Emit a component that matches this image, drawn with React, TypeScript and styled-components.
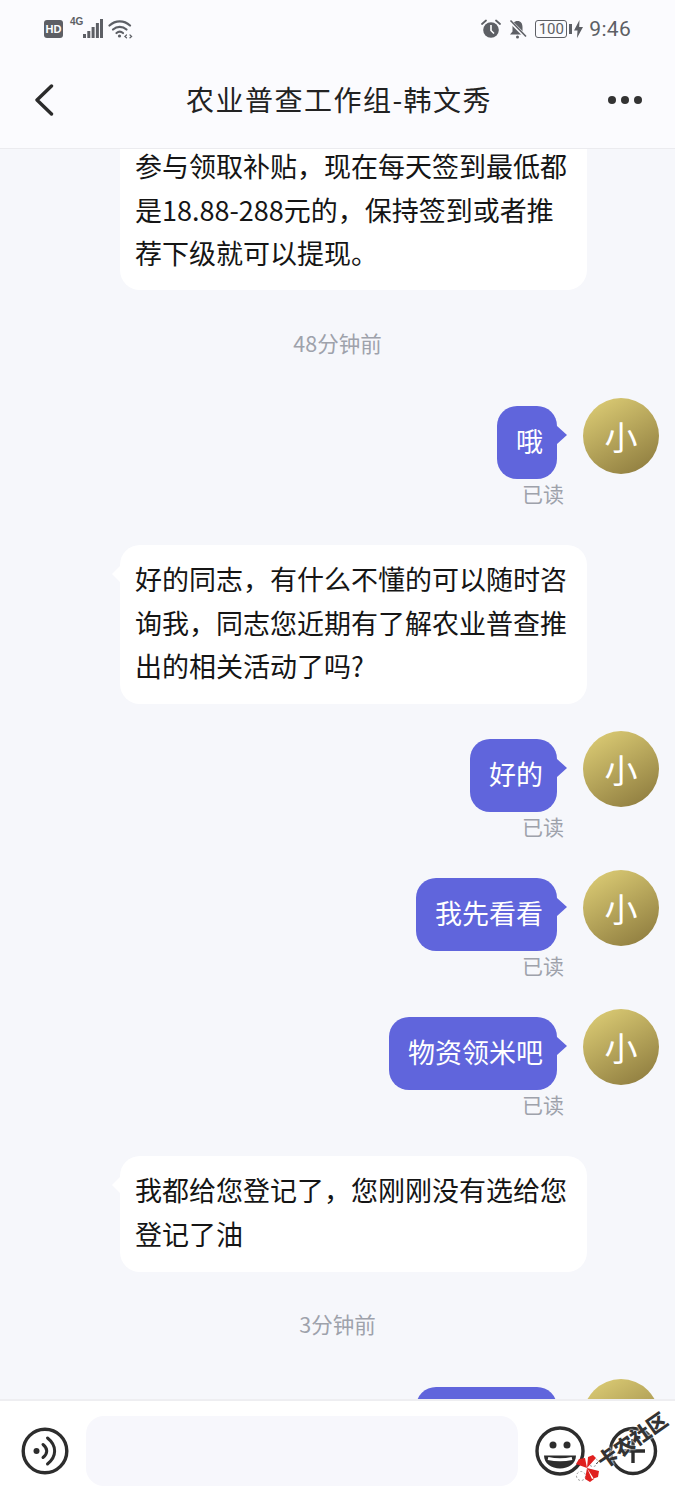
import React from "react";
import styled, { createGlobalStyle } from "styled-components";

const GlobalStyle = createGlobalStyle`
    html, body {
        margin: 0;
        padding: 0;
        background: #f6f7fb;
    }
    * {
        box-sizing: border-box;
    }
`;

type Item =
    | { kind: "in"; text: string; first?: boolean }
    | { kind: "out"; text: string; width?: number }
    | { kind: "time"; text: string };

const messages: Item[] = [
    { kind: "in", first: true, text: "参与领取补贴，现在每天签到最低都是18.88-288元的，保持签到或者推荐下级就可以提现。" },
    { kind: "time", text: "48分钟前" },
    { kind: "out", text: "哦" },
    { kind: "in", text: "好的同志，有什么不懂的可以随时咨询我，同志您近期有了解农业普查推出的相关活动了吗?" },
    { kind: "out", text: "好的" },
    { kind: "out", text: "我先看看" },
    { kind: "out", text: "物资领米吧" },
    { kind: "in", text: "我都给您登记了，您刚刚没有选给您登记了油" },
    { kind: "time", text: "3分钟前" },
    // only the top of this one shows above the input bar
    { kind: "out", text: "", width: 141 },
];

function StatusLeft() {
    return (
        <StatusGroup>
            <HdBadge>HD</HdBadge>
            <NetLabel>4G</NetLabel>
            <svg width="20" height="20" viewBox="0 0 20 20" fill="#5d5f65">
                <rect x="0" y="15" width="3" height="4" />
                <rect x="4.3" y="12" width="3" height="7" />
                <rect x="8.6" y="8" width="3" height="11" />
                <rect x="12.9" y="4" width="3" height="15" />
                <rect x="17" y="0" width="3" height="19" />
            </svg>
            <WifiIcon width="25" height="20" viewBox="0 0 25 20" fill="none" stroke="#5d5f65" strokeWidth="2.2" strokeLinecap="round">
                <path d="M1.5 6.5C7.5 1 16 1 22 6.5" />
                <path d="M5 10.5C9 7 14.5 7 18.5 10.5" />
                <path d="M8.5 14C10.5 12.4 13 12.4 15 14" />
                <circle cx="11.5" cy="17" r="1.6" fill="#5d5f65" stroke="none" />
                <path d="M18.5 16l-1.6 1.4 1.6 1.4M22 16l1.6 1.4-1.6 1.4" strokeWidth="1.2" />
            </WifiIcon>
        </StatusGroup>
    );
}

function StatusRight() {
    return (
        <StatusGroup>
            <svg width="20" height="20" viewBox="0 0 20 20">
                <circle cx="10" cy="11" r="7.8" fill="#5d5f65" />
                <path d="M10 6v5.5l3 3" fill="none" stroke="#fff" strokeWidth="1.6" />
                <path d="M1 5l4-3.5M19 5l-4-3.5" stroke="#5d5f65" strokeWidth="1.8" strokeLinecap="round" />
            </svg>
            <BellIcon width="19" height="20" viewBox="0 0 19 20">
                <path d="M9.5 2c-3.4 0-5 2.600-5 6v4.500L2 15.500h15L14.500 12.500V8c0-3.400-1.600-6-5-6z" fill="#5d5f65" />
                <circle cx="9.500" cy="18" r="1.500" fill="#5d5f65" />
                <path d="M1.500 1.500l16 16" stroke="#fbfbfe" strokeWidth="3.500" />
                <path d="M2.500 1.500l15.500 16" stroke="#5d5f65" strokeWidth="1.600" />
            </BellIcon>
            <Battery>100</Battery>
            <BatteryNub />
            <svg width="9" height="18" viewBox="0 0 9 18" fill="#5d5f65">
                <path d="M5.500 0L0 10.500h3.500L3 18l6-11H5.200z" />
            </svg>
            <Clock>9:46</Clock>
        </StatusGroup>
    );
}

function Row({ item }: { item: Item }) {
    if (item.kind === "time") {
        return <TimeLabel>{item.text}</TimeLabel>;
    }
    if (item.kind === "in") {
        return <InBubble $first={item.first}>{item.text}</InBubble>;
    }
    return (
        <OutRow>
            <OutColumn>
                <OutBubble $width={item.width}>{item.text}</OutBubble>
                {item.text && <ReadLabel>已读</ReadLabel>}
            </OutColumn>
            <Avatar>{item.text ? "小" : ""}</Avatar>
        </OutRow>
    );
}

export default function App() {
    return (
        <>
            <GlobalStyle />
            <Page>
                <Header>
                    <StatusBar>
                        <StatusLeft />
                        <StatusRight />
                    </StatusBar>
                    <NavBar>
                        <BackIcon width="20" height="32" viewBox="0 0 20 32" fill="none" stroke="#2b2b2b" strokeWidth="3.400" strokeLinecap="round" strokeLinejoin="round">
                            <path d="M17.500 2L3 16l14.500 14" />
                        </BackIcon>
                        <Title>农业普查工作组-韩文秀</Title>
                        <MoreDots>
                            <i />
                            <i />
                            <i />
                        </MoreDots>
                    </NavBar>
                </Header>

                <Chat>
                    {messages.map((item, key) => <Row item={item} key={key} />)}
                </Chat>

                <Footer>
                    <svg width="48" height="48" viewBox="0 0 48 48" fill="none" stroke="#2d2d2d" strokeLinecap="round">
                        <circle cx="24" cy="24" r="21.800" strokeWidth="3.400" />
                        <circle cx="15.500" cy="24" r="3" fill="#2d2d2d" stroke="none" />
                        <path d="M22 17.500c5 4 5 9 0 13" strokeWidth="3" />
                        <path d="M26.500 11c9.500 7.500 9.500 18.500 0 26" strokeWidth="3" />
                    </svg>
                    <InputBox />
                    <svg width="50" height="50" viewBox="0 0 50 50" fill="none" stroke="#2d2d2d">
                        <circle cx="25" cy="25" r="23" strokeWidth="3.400" />
                        <circle cx="18" cy="19" r="3.500" fill="#2d2d2d" stroke="none" />
                        <circle cx="32" cy="19" r="3.500" fill="#2d2d2d" stroke="none" />
                        <path d="M9 29.500h32c0 8-7.500 13-16 13S9 37.500 9 29.500z" fill="#2d2d2d" stroke="none" />
                        <path d="M13 32.500c7 1.500 17 1.500 24 0" stroke="#fff" strokeWidth="3" />
                    </svg>
                    <PlusIcon width="50" height="50" viewBox="0 0 50 50" fill="none" stroke="#2d2d2d" strokeWidth="3.400">
                        <circle cx="25" cy="25" r="22.500" />
                        <path d="M25 13v24M13 25h24" />
                    </PlusIcon>
                    <WatermarkBow width="30" height="30" viewBox="0 0 30 30">
                        <circle cx="6" cy="22" r="4.500" fill="#fff" stroke="#999" strokeDasharray="2 2" />
                        <circle cx="18" cy="8" r="4.500" fill="#fff" stroke="#999" strokeDasharray="2 2" />
                        <path d="M12 14L1 10l3-5 6-1zM12 14l1-11 5-2 3 3zM12 14l12 3-1 6-6 2zM12 14l-2 11 5 3 4-3z" fill="#e0201f" />
                        <path d="M21 10l5-5" stroke="#555" strokeWidth="1" />
                    </WatermarkBow>
                    <WatermarkText>卡农社区</WatermarkText>
                </Footer>
            </Page>
        </>
    );
}

const Page = styled.div`
    position: relative;
    display: flex;
    flex-direction: column;
    width: 675px;
    height: 1500px;
    overflow: hidden;
    background-color: #f6f7fb;
    font-family: "Noto Sans CJK SC", "Noto Sans", sans-serif;
`;

const Header = styled.header`
    flex: none;
    height: 149px;
    background-color: #fbfbfe;
    border-bottom: 1px solid #ebebef;
`;

const StatusBar = styled.div`
    display: flex;
    justify-content: space-between;
    align-items: center;
    height: 58px;
    padding: 0 44px;
`;

const StatusGroup = styled.div`
    display: flex;
    align-items: center;
`;

const HdBadge = styled.span`
    display: flex;
    justify-content: center;
    align-items: center;
    width: 19px;
    height: 18px;
    border-radius: 3px;
    background-color: #5d5f65;
    color: #fff;
    font-family: "Liberation Sans", sans-serif;
    font-size: 11px;
    font-weight: 700;
`;

const NetLabel = styled.span`
    align-self: flex-start;
    margin: -3px 0 0 7px;
    color: #5d5f65;
    font-family: "Liberation Sans", sans-serif;
    font-size: 10px;
    font-weight: 700;
`;

const WifiIcon = styled.svg`
    margin-left: 5px;
`;

const BellIcon = styled.svg`
    margin-left: 7px;
`;

const Battery = styled.span`
    display: flex;
    justify-content: center;
    align-items: center;
    width: 32px;
    height: 18px;
    margin-left: 8px;
    border: 1.500px solid #5d5f65;
    border-radius: 3px;
    color: #5d5f65;
    font-family: "Roboto", sans-serif;
    font-size: 15px;
`;

const BatteryNub = styled.span`
    width: 3px;
    height: 10px;
    margin: 0 2px;
    background-color: #5d5f65;
`;

const Clock = styled.span`
    margin-left: 6px;
    color: #5d5f65;
    font-family: "Roboto", sans-serif;
    font-size: 21px;
    letter-spacing: 0.300px;
`;

const NavBar = styled.div`
    display: grid;
    grid-template-columns: 1fr auto 1fr;
    align-items: center;
    height: 84px;
    padding: 0 33px 0 36px;
`;

const BackIcon = styled.svg`
    margin-left: -2px;
`;

const Title = styled.h1`
    margin: -2px 0 0;
    color: #222;
    font-size: 28px;
    font-weight: 400;
    letter-spacing: 1.500px;
`;

const MoreDots = styled.div`
    display: flex;
    justify-self: end;
    gap: 5px;

    i {
        width: 8px;
        height: 8px;
        border-radius: 50%;
        background-color: #333;
    }
`;

const Chat = styled.main`
    flex: 1;
    display: flex;
    flex-direction: column;
    min-height: 0;
    overflow: hidden;
`;

const InBubble = styled.div<{ $first?: boolean }>`
    position: relative;
    flex: none;
    width: 467px;
    margin: ${(p) => (p.$first ? "-18px" : "36px")} 0 ${(p) => (p.$first ? "0" : "-1px")} 120px;
    padding: ${(p) => (p.$first ? "13px 15px 15.500px" : "12px 15px 16.500px")};
    border-radius: 20px;
    background-color: #fff;
    color: #151515;
    font-size: 27px;
    line-height: 43.500px;

    &::before {
        content: "";
        display: ${(p) => (p.$first ? "none" : "block")};
        position: absolute;
        top: 21px;
        left: -8px;
        border-right: 8px solid #fff;
        border-top: 8px solid transparent;
        border-bottom: 8px solid transparent;
    }
`;

const TimeLabel = styled.div`
    flex: none;
    height: 30px;
    margin: 38px 0 12px;
    color: #9ea2ab;
    font-size: 21.500px;
    line-height: 30px;
    text-align: center;
`;

const OutRow = styled.div`
    flex: none;
    display: flex;
    justify-content: flex-end;
    gap: 26px;
    padding-right: 16px;
    margin-top: 28px;
`;

const OutColumn = styled.div`
    display: flex;
    flex-direction: column;
    align-items: flex-end;
    padding-top: 8px;
`;

const OutBubble = styled.div<{ $width?: number }>`
    position: relative;
    ${(p) => (p.$width ? `width: ${p.$width}px;` : "")}
    height: 73px;
    padding: 13px 14px 17px 19px;
    border-radius: 20px;
    background-color: #6065dc;
    color: #fff;
    font-size: 27px;
    line-height: 43px;

    &::after {
        content: "";
        position: absolute;
        top: 20px;
        right: -10px;
        border-left: 10px solid #6065dc;
        border-top: 9px solid transparent;
        border-bottom: 9px solid transparent;
    }
`;

const ReadLabel = styled.div`
    height: 30px;
    margin-right: -7px;
    color: #9ea2ab;
    font-size: 21px;
    line-height: 28px;
`;

const Avatar = styled.div`
    display: flex;
    justify-content: center;
    align-items: center;
    width: 76px;
    height: 76px;
    border-radius: 50%;
    background: linear-gradient(150deg, #d8c872 10%, #8d7b3e 95%);
    color: #fff;
    font-size: 33px;
`;

const Footer = styled.footer`
    position: relative;
    z-index: 1;
    flex: none;
    display: flex;
    align-items: center;
    height: 101px;
    padding: 0 0 0 21px;
    background-color: #fff;
    border-top: 2px solid #eeeef1;
`;

const InputBox = styled.div`
    width: 432px;
    height: 70px;
    margin: 0 17px;
    border-radius: 18px;
    background-color: #f7f7fc;
`;

const PlusIcon = styled.svg`
    margin-left: 23px;
`;

const WatermarkBow = styled.svg`
    position: absolute;
    left: 575px;
    top: 53px;
`;

const WatermarkText = styled.span`
    position: absolute;
    left: 592px;
    top: 24px;
    width: 80px;
    transform: rotate(-35deg);
    color: #333;
    font-size: 20px;
    font-weight: 900;
    line-height: 30px;
    white-space: nowrap;
    text-shadow: 0 0 2px #fff, 0 0 2px #fff;
`;
